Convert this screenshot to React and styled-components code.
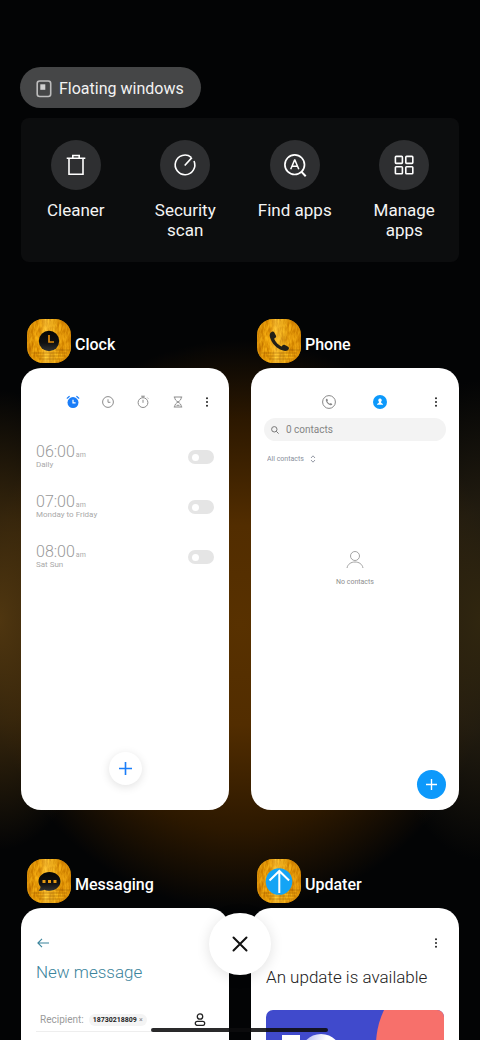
import { useState } from 'react';
import styled, { createGlobalStyle } from 'styled-components';

const GlobalStyle = createGlobalStyle`
  * {
    box-sizing: border-box;
  }
  body {
    margin: 0;
    background: #020304;
    font-family: Roboto, "Noto Sans", sans-serif;
  }
  button, input, select {
    font-family: inherit;
    margin: 0;
  }
  svg {
    display: block;
    flex: none;
  }
`;

const Screen = styled.main`
  height: 100vh;
  overflow-y: auto;
  scrollbar-width: none;
  padding: 67px 21px 40px;
  background:
    radial-gradient(ellipse 110px 230px at 0 620px, #4f3610 0%, rgba(74, 51, 15, 0.7) 45%, transparent 100%),
    radial-gradient(ellipse 110px 240px at 100% 620px, #30260f 0%, rgba(47, 38, 20, 0.7) 45%, transparent 100%),
    radial-gradient(ellipse 260px 285px at 50% 625px, #583100 0%, #522d00 35%, #2c1800 72%, transparent 100%),
    #030405;
`;

const PlainButton = styled.button`
  border: 0;
  padding: 0;
  background: none;
  color: inherit;
  cursor: pointer;
`;

const FloatingButton = styled(PlainButton)`
  display: flex;
  align-items: center;
  gap: 7px;
  height: 41px;
  margin-left: -1px;
  padding: 2px 17px 0 16px;
  border-radius: 21px;
  background: #454647;
  color: #f2f2f2;
  font-size: 16px;
`;

const ToolPanel = styled.nav`
  display: grid;
  grid-template-columns: repeat(4, 1fr);
  margin-top: 10px;
  min-height: 144px;
  padding: 22px 0;
  border-radius: 8px;
  background: #0c0d0e;
`;

const Tool = styled(PlainButton)`
  display: flex;
  flex-direction: column;
  align-items: center;
  gap: 10px;
  color: #f4f4f4;
  font-size: 17px;
  line-height: 20px;
`;

const ToolLabel = styled.span`
  max-width: 80px;
`;

const ToolCircle = styled.span`
  display: flex;
  align-items: center;
  justify-content: center;
  width: 50px;
  height: 50px;
  border-radius: 50%;
  background: #2e2f31;
`;

const AppGrid = styled.div`
  display: grid;
  grid-template-columns: 1fr 1fr;
  gap: 49px 22px;
  margin-top: 57px;
`;

const AppTitle = styled.h2`
  display: flex;
  align-items: center;
  gap: 4px;
  margin: 0 0 5px;
  padding-left: 6px;
  color: #fff;
  font-size: 16px;
  font-weight: 500;
  line-height: 20px;
`;

const AppName = styled.span`
  padding-top: 8px;
`;

const Card = styled.article`
  display: flex;
  flex-direction: column;
  min-height: 442px;
  padding: ${(props) => props.$padding || '24px 15px'};
  border-radius: 20px;
  background: #fff;
  overflow: hidden;
`;

const Tabs = styled.div`
  display: flex;
  align-items: center;
  justify-content: flex-end;
  gap: ${(props) => props.$gap || '0'};
  height: 22px;
  padding-right: ${(props) => props.$inset || '0'};
`;

const Tab = styled(PlainButton)`
  display: flex;
  justify-content: center;
  width: 14px;
`;

const MoreButton = styled(Tab)`
  margin-left: ${(props) => props.$shift || '0'};
`;

const BackButton = styled(PlainButton)`
  margin: 0 auto 0 1px;
`;

const AlarmList = styled.ul`
  display: grid;
  gap: 20px;
  margin: 29px 0 0;
  padding: 0;
  list-style: none;
`;

const AlarmRow = styled.li`
  display: flex;
  align-items: center;
  justify-content: space-between;
  height: 30px;
`;

const AlarmText = styled.label`
  display: block;
  color: #a9a9a9;
  font-size: 8px;
  line-height: 10px;
`;

const AlarmTime = styled.span`
  display: flex;
  align-items: baseline;
  gap: 1px;
  color: #999;
  font-size: 16px;
  font-weight: 300;
  line-height: 16px;

  small {
    color: #aaa;
    font-size: 7px;
    font-weight: 400;
    line-height: 8px;
  }
`;

const Switch = styled.input`
  appearance: none;
  width: 26px;
  height: 14px;
  margin: 0;
  padding: 4px;
  border-radius: 7px;
  background: ${(props) => (props.checked ? '#1a7df8' : '#e5e5e5')};

  &::before {
    content: '';
    display: block;
    width: 7px;
    height: 7px;
    margin-left: ${(props) => (props.checked ? '11px' : '0')};
    border-radius: 50%;
    background: #fff;
  }
`;

const AddButton = styled(PlainButton)`
  display: flex;
  align-items: center;
  justify-content: center;
  align-self: ${(props) => props.$align};
  width: ${(props) => props.$size};
  height: ${(props) => props.$size};
  margin-top: auto;
  border-radius: 50%;
  background: ${(props) => props.$color};
  box-shadow: ${(props) => props.$shadow || 'none'};
`;

const SearchBox = styled.label`
  display: flex;
  align-items: center;
  gap: 7px;
  height: 23px;
  margin-top: 5px;
  padding: 0 7px;
  border-radius: 12px;
  background: #f3f3f3;
`;

const SearchInput = styled.input`
  flex: 1;
  min-width: 0;
  padding: 0;
  border: 0;
  outline: 0;
  background: none;
  font-size: 10px;

  &::placeholder {
    color: #858585;
    opacity: 1;
  }
`;

const Filter = styled.label`
  display: flex;
  align-items: center;
  gap: 5px;
  margin: 13px 0 0 3px;
`;

const FilterSelect = styled.select`
  appearance: none;
  width: 38px;
  height: 10px;
  padding: 0;
  border: 0;
  background: none;
  color: #8a8f9c;
  font-size: 7px;
  line-height: 10px;
`;

const Empty = styled.div`
  display: flex;
  flex-direction: column;
  align-items: center;
  gap: 8px;
  margin-top: 87px;
  color: #8e8e8e;
  font-size: 7px;
  line-height: 10px;
`;

const CardHeading = styled.h3`
  margin: ${(props) => props.$margin};
  color: ${(props) => props.$color};
  font-size: 17px;
  font-weight: 300;
  line-height: 22px;
  white-space: nowrap;
`;

const Recipient = styled.div`
  display: flex;
  align-items: center;
  margin-top: 25px;
  padding: 0 8px 0 4px;
  height: 24px;
  border-bottom: 1px solid #eee;
  color: #9b9b9b;
  font-size: 10px;
`;

const Chip = styled(PlainButton)`
  display: flex;
  align-items: center;
  gap: 2px;
  height: 12px;
  margin: 0 auto 0 5px;
  padding: 0 4px;
  border-radius: 6px;
  background: #f4f4f4;
  color: #222;
  font-size: 7px;
  font-weight: 700;

  span {
    color: #888;
    font-weight: 400;
  }
`;

const Banner = styled.div`
  height: 160px;
  margin-top: 22px;
  border-radius: 7px;
  background: #404acc;
  overflow: hidden;
`;

const CloseButton = styled(PlainButton)`
  position: fixed;
  left: 50%;
  bottom: 65px;
  display: flex;
  align-items: center;
  justify-content: center;
  width: 62px;
  height: 62px;
  margin-left: -31px;
  border-radius: 50%;
  background: #fff;
  box-shadow: 0 2px 14px rgba(0, 0, 0, 0.12);
`;

const HomeBar = styled.div`
  position: fixed;
  left: 50%;
  bottom: 8px;
  width: 177px;
  height: 4px;
  margin-left: -89px;
  border-radius: 2px;
  background: rgba(12, 12, 14, 0.88);
`;

// gold plate behind every launcher icon, the glyph goes on top
const AppIcon = ({ id, children }) => (
  <svg width="44" height="44" viewBox="0 0 44 44" aria-hidden="true">
    <defs>
      <clipPath id={`${id}-clip`}><rect width="44" height="44" rx="16" /></clipPath>
      <filter id={`${id}-gold`} x="0" y="0" width="100%" height="100%" colorInterpolationFilters="sRGB">
        <feTurbulence type="fractalNoise" baseFrequency="0.4 0.12" numOctaves="3" seed="8" />
        <feColorMatrix values="0.6 0 0 0 0.58  0.7 0 0 0 0.26  0.3 0 0 0 -0.1  0 0 0 0 1" />
      </filter>
      <linearGradient id={`${id}-shine`}>
        <stop offset="0" stopColor="#c87800" stopOpacity="0.5" />
        <stop offset="0.25" stopColor="#f09a00" stopOpacity="0.4" />
        <stop offset="0.42" stopColor="#ffc840" stopOpacity="0.6" />
        <stop offset="0.62" stopColor="#f0b020" stopOpacity="0.5" />
        <stop offset="0.75" stopColor="#e08a00" stopOpacity="0.4" />
        <stop offset="1" stopColor="#d88400" stopOpacity="0.5" />
      </linearGradient>
      <linearGradient id={`${id}-dark`} x1="0" y1="0" x2="0" y2="1">
        <stop offset="0" stopColor="#050505" />
        <stop offset="0.6" stopColor="#111" />
        <stop offset="1" stopColor="#333" />
      </linearGradient>
    </defs>
    <g clipPath={`url(#${id}-clip)`}>
      <rect width="44" height="44" filter={`url(#${id}-gold)`} />
      <rect width="44" height="44" fill={`url(#${id}-shine)`} />
      <path d="M4 34h36M9 37h30M12 40h25M28 31h16" stroke="#8a5200" strokeOpacity="0.5" strokeWidth="0.8" />
    </g>
    {children}
  </svg>
);

const Dots = () => (
  <svg width="4" height="10" viewBox="0 0 4 10" fill="#222">
    <circle cx="2" cy="1.2" r="1" />
    <circle cx="2" cy="5" r="1" />
    <circle cx="2" cy="8.8" r="1" />
  </svg>
);

const Plus = ({ size, color, width }) => (
  <svg width={size} height={size} viewBox="0 0 12 12" fill="none" stroke={color} strokeWidth={width}>
    <path d="M6 0v12M0 6h12" />
  </svg>
);

const tools = [
  {
    label: 'Cleaner',
    icon: (
      <svg width="24" height="24" viewBox="0 0 24 24" fill="none" stroke="#fff" strokeWidth="1.6">
        <path d="M2.7 5.3h18.6M5 5.3v15.9h14V5.3M8.8 5V2.5h6.4V5" />
      </svg>
    ),
  },
  {
    label: 'Security scan',
    icon: (
      <svg width="24" height="24" viewBox="0 0 24 24" fill="none" stroke="#fff" strokeWidth="1.6">
        <path d="M18.2 4.3A9.8 9.8 0 1 0 21 8M11.7 12.5l7.2-7.9" />
      </svg>
    ),
  },
  {
    label: 'Find apps',
    icon: (
      <svg width="24" height="24" viewBox="0 0 24 24" fill="none" stroke="#fff" strokeWidth="1.7">
        <circle cx="11.7" cy="11.7" r="9.8" />
        <path d="M18.3 18.6l4.4 4.6" strokeWidth="2" />
        <path d="M7.7 16.2l3.9-9.3h.3l3.9 9.3M9.1 13.2h5.4" strokeWidth="1.5" />
      </svg>
    ),
  },
  {
    label: 'Manage apps',
    icon: (
      <svg width="24" height="24" viewBox="0 0 24 24" fill="none" stroke="#fff" strokeWidth="1.6">
        <rect x="3.4" y="3.4" width="7" height="7" rx="0.8" />
        <rect x="13.8" y="3.4" width="7" height="7" rx="0.8" />
        <rect x="3.4" y="13.8" width="7" height="7" rx="0.8" />
        <rect x="13.8" y="13.8" width="7" height="7" rx="0.8" />
      </svg>
    ),
  },
];

const clockTabs = [
  {
    name: 'Alarm',
    icon: (
      <svg width="14" height="14" viewBox="0 0 14 14">
        <circle cx="7" cy="7.6" r="5.5" fill="#1a7df8" />
        <path d="M1.2 3.2l2-1.7M12.8 3.2l-2-1.7" stroke="#1a7df8" strokeWidth="1.2" strokeLinecap="round" />
        <path d="M7 4.8v3h2.6" fill="none" stroke="#fff" strokeWidth="1.2" />
      </svg>
    ),
  },
  {
    name: 'World clock',
    icon: (
      <svg width="14" height="14" viewBox="0 0 14 14" fill="none" stroke="#8c8c8c">
        <circle cx="7" cy="7" r="5.4" />
        <path d="M7 4.3v3h2.4" />
      </svg>
    ),
  },
  {
    name: 'Stopwatch',
    icon: (
      <svg width="14" height="14" viewBox="0 0 14 14" fill="none" stroke="#8c8c8c">
        <circle cx="7" cy="7.6" r="4.9" />
        <path d="M5.2 1.2h3.6M7 1.2v1.5M7 4.8v3M11.4 2.7l.8.8" />
      </svg>
    ),
  },
  {
    name: 'Timer',
    icon: (
      <svg width="14" height="14" viewBox="0 0 14 14" fill="none" stroke="#8c8c8c">
        <path d="M2.8 2h8.4M2.8 12h8.4M3.7 2c0 2.7 1.4 3.8 3.3 5c-1.9 1.2-3.3 2.3-3.3 5M10.3 2c0 2.7-1.4 3.8-3.3 5c1.9 1.2 3.3 2.3 3.3 5M5.5 10.3h3" />
      </svg>
    ),
  },
];

const initialAlarms = [
  { id: 'alarm-6', time: '06:00', days: 'Daily', on: false },
  { id: 'alarm-7', time: '07:00', days: 'Monday to Friday', on: false },
  { id: 'alarm-8', time: '08:00', days: 'Sat Sun', on: false },
];

const HANDSET = 'M3.3 1.2C1.4 2 .7 3.8 1.4 6.2c1.7 6 6.2 10.6 12.2 12.6c2.5.8 4.6 0 5.4-1.8c.3-.8 0-1.5-.7-1.9l-3.3-1.7c-.7-.3-1.3-.2-1.8.4l-1 1.2C8.9 13.4 6.5 10.9 5.2 7.8l1.3-1c.6-.5.8-1.1.5-1.8L5.4 1.9C5 1.1 4.2.8 3.3 1.2Z';

const ClockCard = () => {
  const [alarms, setAlarms] = useState(initialAlarms);

  const toggleAlarm = (id) => {
    setAlarms(alarms.map((alarm) => (alarm.id === id ? { ...alarm, on: !alarm.on } : alarm)));
  };

  return (
    <Card $padding="23px 15px 25px">
      <Tabs $gap="21px">
        {clockTabs.map((tab) => (
          <Tab key={tab.name} aria-label={tab.name}>{tab.icon}</Tab>
        ))}
        <MoreButton $shift="-6px" aria-label="More"><Dots /></MoreButton>
      </Tabs>
      <AlarmList>
        {alarms.map((alarm) => (
          <AlarmRow key={alarm.id}>
            <AlarmText htmlFor={alarm.id}>
              <AlarmTime>{alarm.time}<small>am</small></AlarmTime>
              {alarm.days}
            </AlarmText>
            <Switch id={alarm.id} type="checkbox" checked={alarm.on} onChange={() => toggleAlarm(alarm.id)} />
          </AlarmRow>
        ))}
      </AlarmList>
      <AddButton $size="33px" $align="center" $color="#fff" $shadow="0 2px 10px rgba(0, 0, 0, 0.12)" aria-label="Add alarm">
        <Plus size={13} color="#1a7df8" width={1.5} />
      </AddButton>
    </Card>
  );
};

const PhoneCard = () => (
  <Card $padding="23px 13px 11px">
    <Tabs $gap="37px" $inset="3px">
      <Tab aria-label="Calls">
        <svg width="14" height="14" viewBox="0 0 14 14" fill="none" stroke="#888">
          <circle cx="7" cy="7" r="6.4" />
          <path d={HANDSET} fill="#888" stroke="none" transform="translate(3.4 3.4) scale(0.36)" />
        </svg>
      </Tab>
      <Tab aria-label="Contacts">
        <svg width="14" height="14" viewBox="0 0 14 14">
          <circle cx="7" cy="7" r="7" fill="#0d99fb" />
          <path d="M7 3.5a1.8 1.8 0 0 1 1.1 3.2v1c.3.5 2 .6 2 2H3.9c0-1.4 1.7-1.5 2-2v-1A1.8 1.8 0 0 1 7 3.5Z" fill="#fff" />
        </svg>
      </Tab>
      <MoreButton $shift="5px" aria-label="More"><Dots /></MoreButton>
    </Tabs>
    <SearchBox>
      <svg width="8" height="8" viewBox="0 0 8 8" fill="none" stroke="#777">
        <circle cx="3.3" cy="3.3" r="2.7" />
        <path d="M5.3 5.3L7.6 7.6" />
      </svg>
      <SearchInput type="text" placeholder="0 contacts" aria-label="Search contacts" />
    </SearchBox>
    <Filter>
      <FilterSelect aria-label="Contact group">
        <option>All contacts</option>
      </FilterSelect>
      <svg width="6" height="8" viewBox="0 0 6 8" fill="none" stroke="#8a8f9c" strokeWidth="0.9">
        <path d="M1 3l2-2.2L5 3M1 5l2 2.2L5 5" />
      </svg>
    </Filter>
    <Empty>
      <svg width="18" height="18" viewBox="0 0 18 18" fill="none" stroke="#999" strokeWidth="0.9">
        <circle cx="9" cy="5" r="4.5" />
        <path d="M1 17c.8-4 4-6 8-6s7.2 2 8 6" />
      </svg>
      No contacts
    </Empty>
    <AddButton $size="29px" $align="flex-end" $color="#0d99fb" aria-label="Add contact">
      <Plus size={11} color="#fff" width={1.5} />
    </AddButton>
  </Card>
);

const MessagingCard = () => (
  <Card>
    <Tabs>
      <BackButton aria-label="Back">
        <svg width="13" height="10" viewBox="0 0 13 10" fill="none" stroke="#3b849c" strokeWidth="1.1">
          <path d="M12 5H1M5 .8L.9 5L5 9.2" />
        </svg>
      </BackButton>
    </Tabs>
    <CardHeading $margin="7px 0 0" $color="#3b849c">New message</CardHeading>
    <Recipient>
      Recipient:
      <Chip>18730218809 <span>×</span></Chip>
      <svg width="12" height="13" viewBox="0 0 12 13" fill="none" stroke="#222" strokeWidth="1.3">
        <circle cx="6" cy="3.5" r="2.7" />
        <path d="M3.3 8.4h5.4a2 2 0 0 1 0 4H3.3a2 2 0 0 1 0-4Z" />
      </svg>
    </Recipient>
  </Card>
);

const UpdaterCard = () => (
  <Card>
    <Tabs $inset="1px">
      <Tab aria-label="More"><Dots /></Tab>
    </Tabs>
    <CardHeading $margin="12px 0 0" $color="#222">An update is available</CardHeading>
    <Banner>
      <svg width="100%" height="160" viewBox="0 0 178 160" preserveAspectRatio="xMinYMin slice">
        <defs>
          <linearGradient id="ball" x1="0" y1="0" x2="1" y2="0.3">
            <stop offset="0" stopColor="#a5aaf0" />
            <stop offset="0.6" stopColor="#fff" />
          </linearGradient>
        </defs>
        <circle cx="190" cy="35" r="80" fill="#f7706b" />
        <path d="M16 25h18v90H16Z" fill="#fff" />
        <circle cx="55" cy="45" r="21" fill="url(#ball)" />
      </svg>
    </Banner>
  </Card>
);

const apps = [
  {
    name: 'Clock',
    Content: ClockCard,
    glyph: (
      <>
        <circle cx="22" cy="22" r="10.2" fill="url(#Clock-dark)" />
        <path d="M22 16v7h5" fill="none" stroke="#e08a0c" strokeWidth="1.7" />
      </>
    ),
  },
  {
    name: 'Phone',
    Content: PhoneCard,
    glyph: <path d={HANDSET} fill="#222018" transform="translate(11.5 11.5) scale(1.07)" />,
  },
  {
    name: 'Messaging',
    Content: MessagingCard,
    glyph: (
      <>
        <path d="M22.5 13c6 0 11 4 11 9.3s-5 9.5-11 9.5c-2 0-3.6-.3-5-1.1c-1.7.9-3.6 1.2-6 1.1c1.3-1.2 1.9-2.4 2-4c-1.3-1.5-2-3.4-2-5.5C11.5 17 16.5 13 22.5 13Z" fill="url(#Messaging-dark)" />
        <path d="M15.5 21h3v3h-3zM21 21h3v3h-3zM26.5 21h3v3h-3z" fill="#e59a14" />
      </>
    ),
  },
  {
    name: 'Updater',
    Content: UpdaterCard,
    glyph: (
      <>
        <circle cx="22" cy="22.5" r="13.3" fill="#14a4f5" />
        <path d="M22.3 34V12M12.5 21.5l9.8-9.5l9.8 9.5" fill="none" stroke="#fff" strokeWidth="2" />
      </>
    ),
  },
];

const App = () => (
  <>
    <GlobalStyle />
    <Screen>
      <FloatingButton>
        <svg width="16" height="18" viewBox="0 0 16 18" fill="none">
          <rect x="1.2" y="1" width="13.5" height="15.5" rx="2.5" stroke="#bdbdbd" strokeWidth="1.6" />
          <rect x="4.3" y="4.3" width="5" height="5.5" fill="#d0d0d0" />
        </svg>
        Floating windows
      </FloatingButton>
      <ToolPanel>
        {tools.map((tool) => (
          <Tool key={tool.label}>
            <ToolCircle>{tool.icon}</ToolCircle>
            <ToolLabel>{tool.label}</ToolLabel>
          </Tool>
        ))}
      </ToolPanel>
      <AppGrid>
        {apps.map(({ name, glyph, Content }) => (
          <section key={name}>
            <AppTitle>
              <AppIcon id={name}>{glyph}</AppIcon>
              <AppName>{name}</AppName>
            </AppTitle>
            <Content />
          </section>
        ))}
      </AppGrid>
      <CloseButton aria-label="Close all">
        <svg width="16" height="16" viewBox="0 0 16 16" stroke="#111" strokeWidth="2">
          <path d="M1.5 1.5l13 13M14.5 1.5l-13 13" strokeLinecap="round" />
        </svg>
      </CloseButton>
      <HomeBar />
    </Screen>
  </>
);

export default App;
